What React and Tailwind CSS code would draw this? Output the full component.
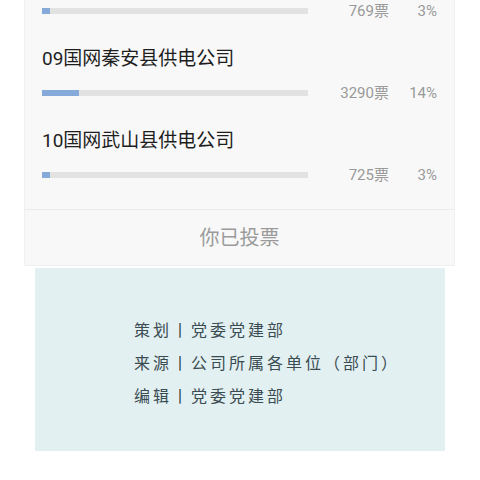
import React from 'react';

const items = [
  { name: null, votes: 769, pct: 3 },
  { name: '09国网秦安县供电公司', votes: 3290, pct: 14 },
  { name: '10国网武山县供电公司', votes: 725, pct: 3 },
];

const credits = [
  ['策划', '党委党建部'],
  ['来源', '公司所属各单位（部门）'],
  ['编辑', '党委党建部'],
];

const VoteRow = ({ votes, pct }) => (
  <div className="flex items-center h-5">
    <div className="w-[266px] h-[6px] bg-[#e2e2e2]">
      <div className="h-full bg-[#85a9d8]" style={{ width: `${pct}%` }} />
    </div>
    <span className="w-[81px] text-right text-[15px] text-[#9a9a9a]">{votes}票</span>
    <span className="w-[48px] text-right text-[15px] text-[#9a9a9a]">{pct}%</span>
  </div>
);

export default function App() {
  return (
    <div className="w-[480px] h-[480px] overflow-hidden bg-white" style={{ fontFamily: 'Roboto, "Noto Sans CJK SC", sans-serif' }}>
      <div className="ml-6 w-[431px] bg-[#f8f8f8] border-x border-b border-[#f0f0f0]">
        <div className="pl-[17px] pt-px">
          {items.map((it, i) => (
            <div key={i} className={i === items.length - 1 ? 'pb-6' : 'pb-[26px]'}>
              {it.name && (
                <div className="h-6 mb-3 flex items-center text-[19px] text-[#1e1e1e]">{it.name}</div>
              )}
              <VoteRow votes={it.votes} pct={it.pct} />
            </div>
          ))}
        </div>
        <div className="border-t border-[#ebebeb] h-[56px] flex items-center justify-center text-[20px] text-[#9b9b9b]">
          你已投票
        </div>
      </div>
      <div className="mt-[2px] ml-[35px] w-[410px] h-[183px] bg-[#e2f0f2] pt-[44px] pl-[99px]">
        {credits.map(([k, v]) => (
          <div key={k} className="h-[33px] flex items-center text-[16px] tracking-[3px] text-[#3a4b51]" style={{ fontFamily: '"Noto Sans CJK SC", sans-serif' }}>
            {k}丨{v}
          </div>
        ))}
      </div>
    </div>
  );
}
